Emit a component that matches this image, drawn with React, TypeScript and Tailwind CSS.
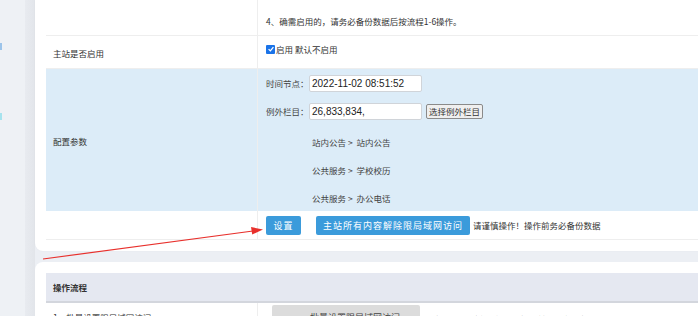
const cjk = { fontFamily: '"Microsoft YaHei", "Noto Sans CJK SC", sans-serif' };
const mono = { fontFamily: '"Liberation Sans", Arial, sans-serif' };

function Checkbox() {
  return (
    <span className="inline-flex w-[9px] h-[9px] rounded-[1px] bg-[#1a73e8] items-center justify-center mr-[1px]">
      <svg viewBox="0 0 10 10" className="w-[8px] h-[8px]">
        <path d="M2 5.2 L4.2 7.3 L8 2.6" fill="none" stroke="white" strokeWidth="1.6" />
      </svg>
    </span>
  );
}

function Row({ label, children, className = "", labelClass = "" }: { label?: string; children: React.ReactNode; className?: string; labelClass?: string }) {
  return (
    <div className={`flex border-b border-[#eeeeee] ${className}`}>
      <div className={`w-[212px] shrink-0 pl-[7px] flex items-center text-[8.5px] text-[#333] border-r border-[#eeeeee] ${labelClass}`}>
        {label}
      </div>
      <div className="flex-1 pl-[8px] text-[8.5px] text-[#333]">{children}</div>
    </div>
  );
}

export default function App() {
  return (
    <div className="relative w-[698px] h-[316px] overflow-hidden flex bg-[#eceff4]" style={cjk}>
      {/* sidebar edge */}
      <div className="w-[25px] shrink-0 bg-[#eef1f5] relative">
        <div className="absolute left-0 top-[43px] w-[2px] h-[7px] bg-[#9cc4ea]" />
        <div className="absolute left-0 top-[113px] w-[2px] h-[7px] bg-[#a6e3ee]" />
      </div>
      <div className="w-[10px] shrink-0 bg-gradient-to-r from-[#e8ebf0] to-[#e2e5ea]" />

      <div className="flex-1 flex flex-col gap-[11px] mr-[-20px]">
        {/* card 1 */}
        <div className="bg-white rounded-b-[8px] pl-[11px] pb-[11px] shadow-[0_0_2px_rgba(0,0,0,0.04)]">
          <Row className="h-[36px]">
            <div className="pt-[15px] leading-[12px]">4、确需启用的，请务必备份数据后按流程1-6操作。</div>
          </Row>
          <Row label="主站是否启用" className="h-[33px]" labelClass="pt-[2px]">
            <div className="pt-[7px] flex items-center leading-[12px]">
              <Checkbox />
              <span>启用 默认不启用</span>
            </div>
          </Row>
          <Row label="配置参数" className="h-[142px] bg-[#dcecf8] border-b-0" labelClass="pt-[2px]">
            <div className="pt-[6px] flex flex-col">
              <div className="flex items-center h-[17px]">
                <span className="w-[43px] text-[#444]">时间节点：</span>
                <div className="w-[113px] h-[17px] bg-white border border-[#d0d4d9] rounded-[2px] flex items-center px-[2px] text-[10px] text-[#222]" style={mono}>
                  2022-11-02 08:51:52
                </div>
              </div>
              <div className="flex items-center h-[17px] mt-[11px]">
                <span className="w-[43px] text-[#444]">例外栏目：</span>
                <div className="w-[113px] h-[17px] bg-white border border-[#d0d4d9] rounded-[2px] flex items-center px-[2px] text-[10px] text-[#222]" style={mono}>
                  26,833,834,
                </div>
                <button className="ml-[4px] h-[15px] w-[57px] bg-[#efefef] border border-[#8a8a8a] rounded-[2px] text-[8.5px] text-[#333] leading-none flex items-center justify-center">
                  选择例外栏目
                </button>
              </div>
              <div className="pl-[46px] mt-[16px] flex flex-col gap-[16px] text-[#444] leading-[12px]">
                <div>站内公告 &gt;&nbsp; 站内公告</div>
                <div>公共服务 &gt;&nbsp; 学校校历</div>
                <div>公共服务 &gt;&nbsp; 办公电话</div>
              </div>
            </div>
          </Row>
          <Row className="h-[29px]">
            <div className="pt-[5px] flex items-center">
              <button className="h-[19px] w-[35px] bg-[#3b9bdb] rounded-[2px] text-white text-[9px] tracking-[1px]">设置</button>
              <button className="ml-[15px] h-[19px] w-[154px] bg-[#3b9bdb] rounded-[2px] text-white text-[9px] tracking-[1px]">主站所有内容解除限局域网访问</button>
              <span className="ml-[3px] text-[#333]">请谨慎操作！操作前务必备份数据</span>
            </div>
          </Row>
        </div>

        {/* card 2 */}
        <div className="flex-1 bg-white rounded-t-[8px] pl-[11px] pt-[11px]">
          <div className="h-[30px] bg-[#e5e8f1] border-b-2 border-[#d3d6dd] flex items-center pl-[7px] text-[8.5px] font-bold text-[#333]">
            操作流程
          </div>
          <div className="flex">
            <div className="w-[212px] shrink-0 pl-[7px] pt-[8px] text-[8.5px] text-[#333] border-r border-[#eeeeee] leading-[12px]">
              1、批量设置限局域网访问
            </div>
            <div className="flex-1 pl-[14px] pt-[2px] flex items-start">
              <button className="h-[20px] w-[148px] bg-[#dcdcdc] rounded-t-[2px] text-[9px] text-[#444] pt-[6px]">一、批量设置限局域网访问</button>
              <span className="ml-[7px] pt-[8px] text-[8.5px] text-[#444]">本操作仅针对主站栏目，操作前务必备份数据</span>
            </div>
          </div>
        </div>
      </div>

      {/* red annotation arrow */}
      <svg className="absolute left-0 top-0 pointer-events-none" width="698" height="316">
        <line x1="43" y1="259" x2="253" y2="231" stroke="#e8302c" strokeWidth="1.2" />
        <polygon points="263,229.5 251,227 252.2,234.5" fill="#e8302c" />
      </svg>
    </div>
  );
}
